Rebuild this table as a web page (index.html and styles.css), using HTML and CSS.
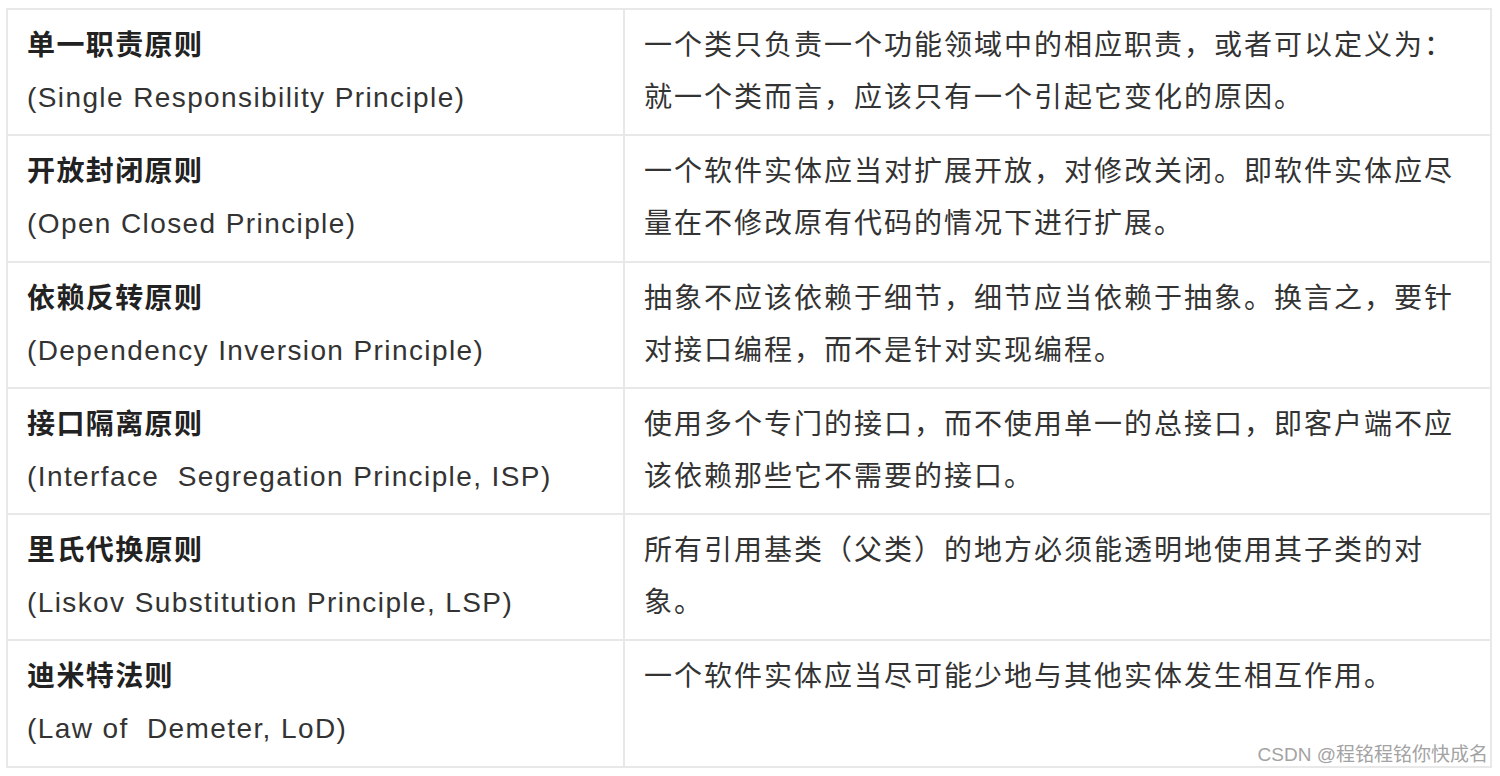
FILE: index.html
```html
<!DOCTYPE html>
<html lang="zh-CN">
<head>
<meta charset="utf-8">
<title>设计原则</title>
<link rel="stylesheet" href="styles.css">
</head>
<body>
<div class="page">
  <table class="principles">
    <colgroup>
      <col class="col-name">
      <col class="col-desc">
    </colgroup>
    <tbody>
      <tr>
        <td class="name"><strong>单一职责原则</strong><br>(Single Responsibility Principle)</td>
        <td class="desc">一个类只负责一个功能领域中的相应职责，或者可以定义为：就一个类而言，应该只有一个引起它变化的原因。</td>
      </tr>
      <tr>
        <td class="name"><strong>开放封闭原则</strong><br>(Open Closed Principle)</td>
        <td class="desc">一个软件实体应当对扩展开放，对修改关闭。即软件实体应尽量在不修改原有代码的情况下进行扩展。</td>
      </tr>
      <tr>
        <td class="name"><strong>依赖反转原则</strong><br>(Dependency Inversion Principle)</td>
        <td class="desc">抽象不应该依赖于细节，细节应当依赖于抽象。换言之，要针对接口编程，而不是针对实现编程。</td>
      </tr>
      <tr>
        <td class="name"><strong>接口隔离原则</strong><br>(Interface&nbsp; Segregation Principle, ISP)</td>
        <td class="desc">使用多个专门的接口，而不使用单一的总接口，即客户端不应该依赖那些它不需要的接口。</td>
      </tr>
      <tr>
        <td class="name"><strong>里氏代换原则</strong><br>(Liskov Substitution Principle, LSP)</td>
        <td class="desc">所有引用基类（父类）的地方必须能透明地使用其子类的对象。</td>
      </tr>
      <tr>
        <td class="name"><strong>迪米特法则</strong><br>(Law of&nbsp; Demeter, LoD)</td>
        <td class="desc">一个软件实体应当尽可能少地与其他实体发生相互作用。</td>
      </tr>
    </tbody>
  </table>
  <div class="watermark">CSDN @程铭程铭你快成名</div>
</div>
</body>
</html>
```
FILE: styles.css
```css
html, body {
  margin: 0;
  padding: 0;
  background: #ffffff;
}

body {
  padding: 8px 8px 0 6px;
  font-family: "Liberation Sans", "Noto Sans CJK SC", sans-serif;
  color: #333333;
}

.page {
  position: relative;
  width: 1486px;
}

.principles {
  width: 1486px;
  border-collapse: collapse;
  table-layout: fixed;
  border: 2px solid #e8e8e8;
}

.col-name {
  width: 617px;
}

.principles td {
  border: 2px solid #e8e8e8;
  font-size: 28px;
  line-height: 52px;
  letter-spacing: 1.4px;
  vertical-align: top;
  padding: 10px 30px 10.3px 19px;
  height: 104px;
}

.principles td.desc {
  letter-spacing: 2px;
  padding-right: 28px;
}

.principles td.name strong {
  font-weight: 700;
  color: #222222;
}

.watermark {
  position: absolute;
  right: 4px;
  bottom: 3px;
  font-family: "Liberation Sans", "Noto Sans CJK SC", sans-serif;
  font-size: 19px;
  line-height: 20px;
  color: #a3a3a3;
  letter-spacing: 0;
}
```
